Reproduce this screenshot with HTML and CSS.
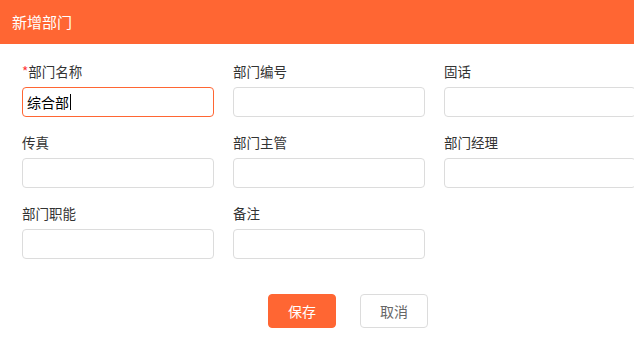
FILE: index.html
```html
<!DOCTYPE html>
<html lang="zh-CN">
<head>
    <meta charset="UTF-8">
    <title>新增部门</title>
    <link rel="stylesheet" href="styles.css">
</head>
<body>
    <div class="header">新增部门</div>
    <div class="form">
        <div class="grid">
            <div class="field">
                <div class="label"><span class="star">*</span>部门名称</div>
                <div class="input-wrap">
                    <input type="text" class="input active" value="综合部">
                    <span class="caret"></span>
                </div>
            </div>
            <div class="field">
                <div class="label">部门编号</div>
                <input type="text" class="input">
            </div>
            <div class="field">
                <div class="label">固话</div>
                <input type="text" class="input">
            </div>
            <div class="field">
                <div class="label">传真</div>
                <input type="text" class="input">
            </div>
            <div class="field">
                <div class="label">部门主管</div>
                <input type="text" class="input">
            </div>
            <div class="field">
                <div class="label">部门经理</div>
                <input type="text" class="input">
            </div>
            <div class="field">
                <div class="label">部门职能</div>
                <input type="text" class="input">
            </div>
            <div class="field">
                <div class="label">备注</div>
                <input type="text" class="input">
            </div>
        </div>
        <div class="buttons">
            <button class="btn btn-primary">保存</button>
            <button class="btn">取消</button>
        </div>
    </div>
</body>
</html>
```

FILE: styles.css
```css
body {
    margin: 0;
    font-family: "Noto Sans CJK SC", "Liberation Sans", sans-serif;
    font-size: 14px;
    color: #333;
    background: #fff;
    overflow: hidden;
}
.header {
    height: 44px;
    line-height: 44px;
    padding-left: 12px;
    background-color: #ff6633;
    color: #fff;
    font-size: 15px;
}
.form {
    padding: 17px 0 0 22px;
}
.grid {
    display: grid;
    grid-template-columns: repeat(3, 192px);
    column-gap: 19px;
    row-gap: 15px;
}
.label {
    height: 20px;
    line-height: 20px;
    margin-bottom: 6px;
    font-size: 13.5px;
}
.star {
    color: #f33;
}
.input-wrap {
    position: relative;
}
.input {
    display: block;
    width: 192px;
    height: 30px;
    box-sizing: border-box;
    border: 1px solid #dcdcdc;
    border-radius: 4px;
    padding: 0 4px;
    font-family: inherit;
    font-size: 14px;
    color: #000;
    outline: none;
}
.input.active {
    border-color: #ff6633;
}
.caret {
    position: absolute;
    left: 48px;
    top: 7px;
    width: 1px;
    height: 16px;
    background: #000;
}
.buttons {
    display: flex;
    gap: 24px;
    padding: 35px 0 0 246px;
}
.btn {
    width: 68px;
    height: 34px;
    border: 1px solid #dcdcdc;
    border-radius: 4px;
    background: #fff;
    color: #666;
    font-family: inherit;
    font-size: 14px;
    cursor: pointer;
}
.btn-primary {
    background: #ff6633;
    border-color: #ff6633;
    color: #fff;
}
```
